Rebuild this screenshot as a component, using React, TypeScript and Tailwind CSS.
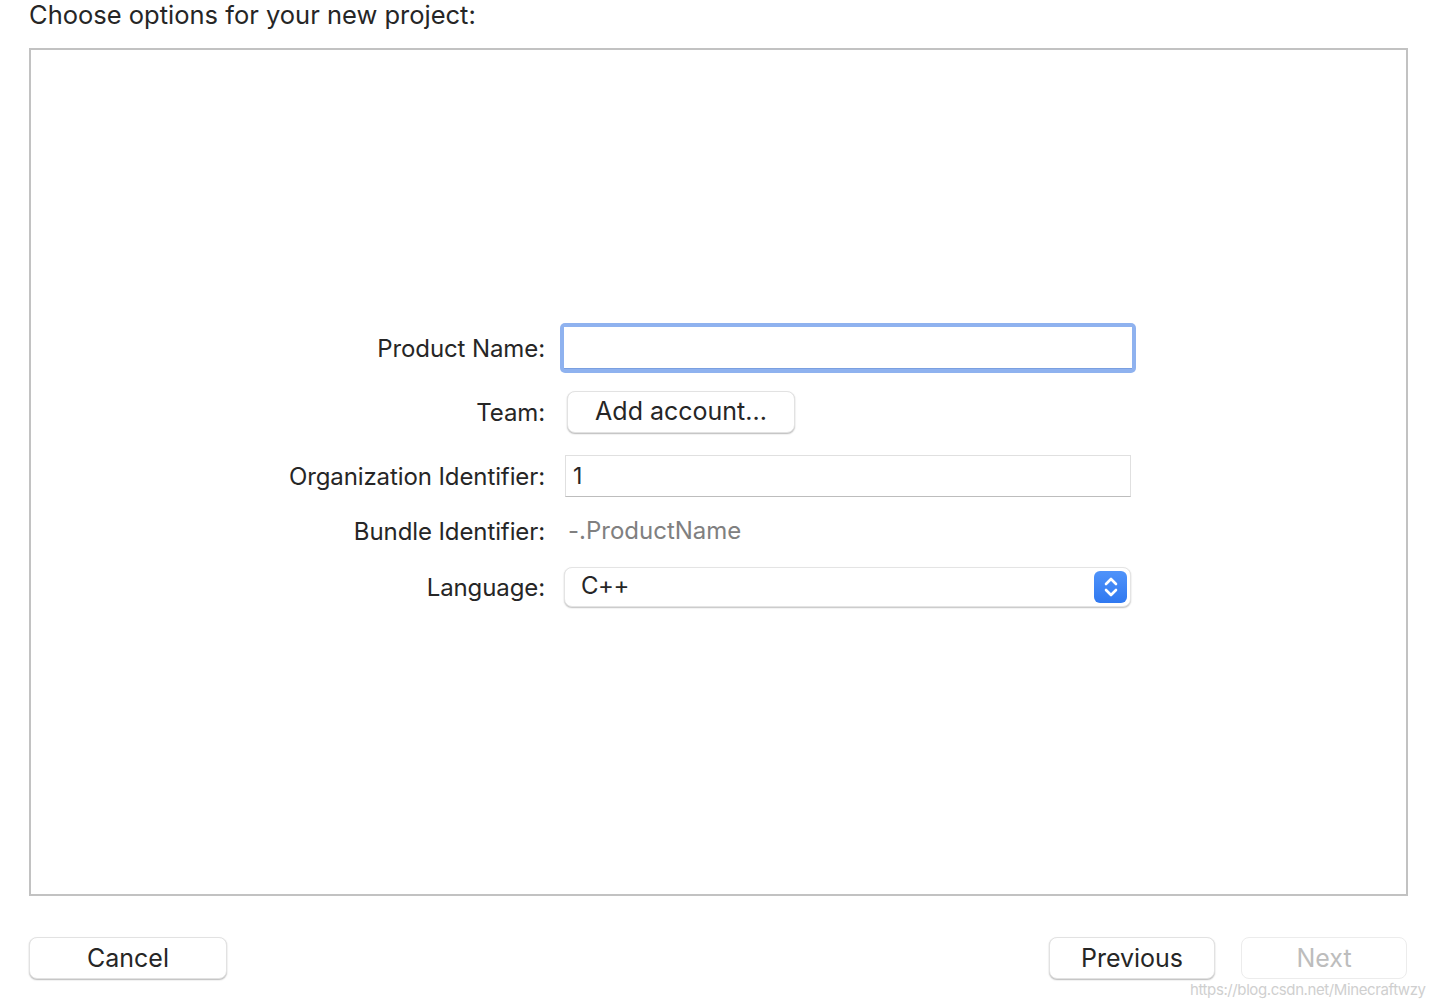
import React from "react";

const font = { fontFamily: "Inter, 'Noto Sans', sans-serif" };

function Row({ label, children, className }: { label: string; children: React.ReactNode; className: string }) {
  return (
    <div className={`flex items-center ${className}`}>
      <div className="w-[514px] shrink-0 text-right text-[24px] text-[#262626] tracking-[-0.1px] pt-[2px]">{label}</div>
      {children}
    </div>
  );
}

function MacButton({ children, className }: { children: React.ReactNode; className: string }) {
  return (
    <button
      type="button"
      className={`h-[42px] rounded-[8px] bg-white border border-[#e2e2e2] shadow-[0_1px_1.5px_rgba(0,0,0,0.28)] text-[25px] leading-none flex items-center justify-center ${className}`}
    >
      {children}
    </button>
  );
}

export default function App() {
  return (
    <div className="relative w-[1436px] h-[1008px] bg-white overflow-hidden" style={font}>
      {/* heading */}
      <div className="h-[48px] pl-[29px] text-[25.5px] leading-[29px] text-[#262626]">
        Choose options for your new project:
      </div>

      {/* options panel */}
      <div className="ml-[29px] w-[1379px] h-[848px] border-2 border-[#c2c2c2] pt-[273px]">
        <Row label="Product Name:" className="h-[50px]">
          <div className="ml-[15px] w-[576px] h-[50px] rounded-[5px] bg-[#8fb2ef] p-[4px]">
            <div className="w-full h-full bg-white border-b border-[#7a9fe0]" />
          </div>
        </Row>

        <Row label="Team:" className="mt-[18px] h-[42px]">
          <MacButton className="ml-[22px] w-[228px] text-[#262626] pb-[2px]">Add account...</MacButton>
        </Row>

        <Row label="Organization Identifier:" className="mt-[22px] h-[42px]">
          <div className="ml-[20px] w-[566px] h-[42px] border border-[#e0e0e0] border-b-[#bdbdbd] bg-white flex items-center pl-[7px] text-[23px] text-[#262626]">
            1
          </div>
        </Row>

        <Row label="Bundle Identifier:" className="mt-[17px] h-[34px]">
          <div className="ml-[23px] text-[24px] text-[#808080]">-.ProductName</div>
        </Row>

        <Row label="Language:" className="mt-[19px] h-[40px]">
          <div className="ml-[19px] w-[567px] h-[40px] rounded-[8px] bg-white border border-[#e4e4e4] shadow-[0_1px_1.5px_rgba(0,0,0,0.25)] flex items-center pl-[16px] pr-[3px]">
            <span className="flex-1 text-[24px] text-[#262626] pb-[3px] tracking-[-0.5px]">C++</span>
            <div className="w-[33px] h-[32px] rounded-[6px] bg-gradient-to-b from-[#4f93fa] to-[#2f78f0] flex items-center justify-center">
              <svg width="18" height="26" viewBox="0 0 18 26" fill="none" stroke="white" strokeWidth="2.6" strokeLinecap="round" strokeLinejoin="round">
                <path d="M4 10L9 5L14 10" />
                <path d="M4 16L9 21L14 16" />
              </svg>
            </div>
          </div>
        </Row>
      </div>

      {/* footer buttons */}
      <div className="mt-[41px] pl-[29px] pr-[29px] flex items-center">
        <MacButton className="w-[198px] text-[#262626]">Cancel</MacButton>
        <div className="flex-1" />
        <MacButton className="w-[166px] text-[#262626]">Previous</MacButton>
        <MacButton className="ml-[26px] w-[166px] text-[#bdbdbd] shadow-none border-[#ececec]">Next</MacButton>
      </div>

      <div className="absolute left-[1190px] top-[979px] text-[15px] text-[#cfcfcf] tracking-[-0.4px] whitespace-nowrap">
        https://blog.csdn.net/Minecraftwzy
      </div>
    </div>
  );
}
